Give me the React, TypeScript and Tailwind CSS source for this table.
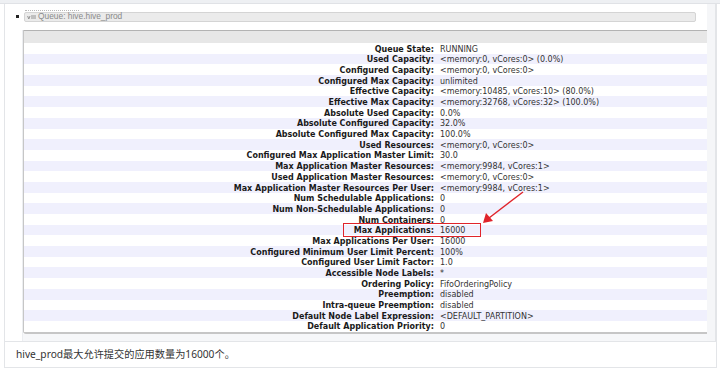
import React from 'react';

const rows: [string, string][] = [
  ['Queue State:', 'RUNNING'],
  ['Used Capacity:', '<memory:0, vCores:0> (0.0%)'],
  ['Configured Capacity:', '<memory:0, vCores:0>'],
  ['Configured Max Capacity:', 'unlimited'],
  ['Effective Capacity:', '<memory:10485, vCores:10> (80.0%)'],
  ['Effective Max Capacity:', '<memory:32768, vCores:32> (100.0%)'],
  ['Absolute Used Capacity:', '0.0%'],
  ['Absolute Configured Capacity:', '32.0%'],
  ['Absolute Configured Max Capacity:', '100.0%'],
  ['Used Resources:', '<memory:0, vCores:0>'],
  ['Configured Max Application Master Limit:', '30.0'],
  ['Max Application Master Resources:', '<memory:9984, vCores:1>'],
  ['Used Application Master Resources:', '<memory:0, vCores:0>'],
  ['Max Application Master Resources Per User:', '<memory:9984, vCores:1>'],
  ['Num Schedulable Applications:', '0'],
  ['Num Non-Schedulable Applications:', '0'],
  ['Num Containers:', '0'],
  ['Max Applications:', '16000'],
  ['Max Applications Per User:', '16000'],
  ['Configured Minimum User Limit Percent:', '100%'],
  ['Configured User Limit Factor:', '1.0'],
  ['Accessible Node Labels:', '*'],
  ['Ordering Policy:', 'FifoOrderingPolicy'],
  ['Preemption:', 'disabled'],
  ['Intra-queue Preemption:', 'disabled'],
  ['Default Node Label Expression:', '<DEFAULT_PARTITION>'],
  ['Default Application Priority:', '0'],
];

export default function App() {
  return (
    <div className="relative w-[720px] h-[370px] overflow-hidden bg-white font-['DejaVu_Sans',sans-serif]">
      <div className="h-[4px] bg-[#eef0f3] border-b border-[#e0e2e6]" />
      <div className="ml-[4px] w-[713px] border-x border-b border-[#e3e5e8]">
        {/* screenshot area */}
        <div className="flex h-[337px]">
          <div className="flex-1 flex flex-col bg-white">
            <div className="flex items-center h-[26px] pl-[11px] pr-[11px] pb-[1px]">
              <div className="w-[3px] h-[3px] bg-[#222] mr-[5px]" />
              <div className="relative flex-1 h-[10px] flex items-center bg-[#ebebeb] border border-[#d4d4d4] rounded-[2px] pl-[2px] font-['Liberation_Sans',sans-serif] text-[8.4px] text-[#8a8a8a]">
                <div className="absolute left-0 top-[-3px] w-[54px] border-t border-dotted border-[#b8b8b8]" />
                <svg width="10" height="7" viewBox="0 0 10 7" className="mr-[1px]">
                  <path d="M0.6 3 L1.8 6 L3 3" fill="none" stroke="#8a8a8a" strokeWidth="0.9" />
                  <path d="M4 3 H9 M4 5 H9" stroke="#8a8a8a" strokeWidth="0.9" />
                </svg>
                <span>Queue: hive.hive_prod</span>
              </div>
            </div>
            <div className="flex-1 flex">
              <div className="w-[18px] border-r border-[#eceef1]" />
              <div className="flex-1 flex flex-col">
                <div className="flex-1 flex flex-col border-l border-b-2 border-[#c6c6c6] rounded-bl-[3px]">
                  <div className="h-[13px] bg-[#e7e7e7] border-t border-[#b3b3b3]" />
                  {rows.map(([label, value], i) => (
                    <div
                      key={label}
                      className={`flex h-[10.7px] items-start pt-[2.6px] text-[8px] leading-none ${i % 2 === 1 ? 'bg-[#f0f0fd]' : 'bg-white'}`}
                    >
                      <div className="w-[410px] text-right font-bold text-[#1a1a1a] whitespace-nowrap">{label}</div>
                      <div className="pl-[6px] text-[#333] whitespace-nowrap">{value}</div>
                    </div>
                  ))}
                </div>
                <div className="h-[7px] bg-[#f6f7f9]" />
              </div>
            </div>
          </div>
          <div className="w-[9px] bg-[#f5f6f8] border-r border-[#e3e5e8]" />
        </div>
        {/* caption */}
        <div className="h-[26px] flex items-center pl-[11px] pt-[1px] border-t border-[#e3e5e8] font-['Noto_Sans','Noto_Sans_CJK_SC',sans-serif] text-[10.2px] text-[#333]">
          hive_prod最大允许提交的应用数量为16000个。
        </div>
      </div>

      {/* red highlight */}
      <div className="absolute left-[343px] top-[223px] w-[138px] h-[14px] border border-[#e0242b]" />
      <svg className="absolute left-0 top-0" width="720" height="370">
        <line x1="523" y1="192" x2="489" y2="218" stroke="#e0242b" strokeWidth="1.4" />
        <polygon points="483,223 486,213 493,221" fill="#e0242b" />
      </svg>
    </div>
  );
}
